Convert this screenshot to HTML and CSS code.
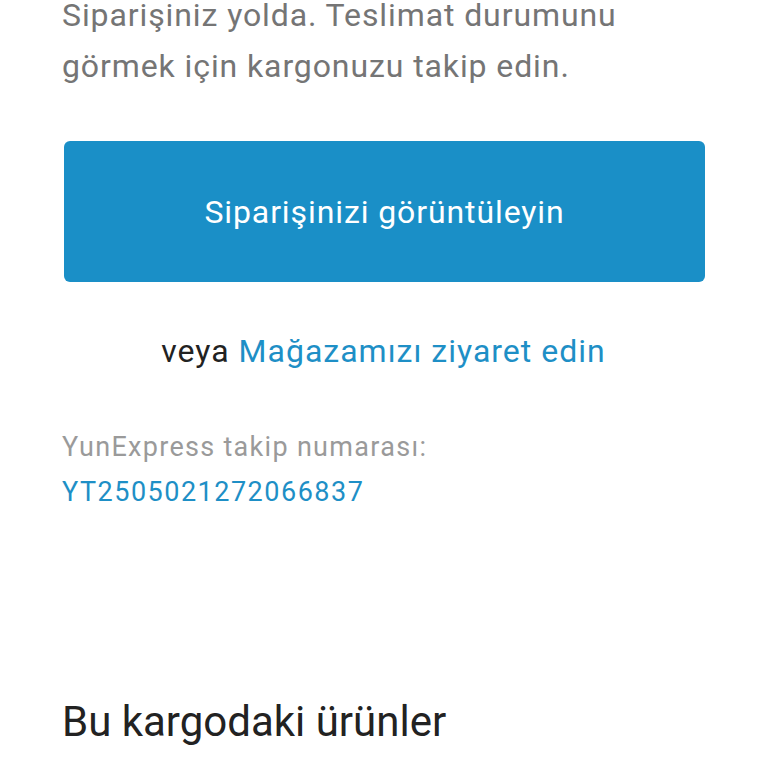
FILE: index.html
```html
<!DOCTYPE html>
<html lang="tr">
<head>
<meta charset="utf-8">
<link rel="stylesheet" href="styles.css">
</head>
<body>
<main class="page">
  <p class="intro">Siparişiniz yolda. Teslimat durumunu<br>görmek için kargonuzu takip edin.</p>
  <a class="btn" href="#">Siparişinizi görüntüleyin</a>
  <p class="alt">veya <a class="link" href="#">Mağazamızı ziyaret edin</a></p>
  <div class="tracking">
    <div class="track-label">YunExpress takip numarası:</div>
    <a class="track-num" href="#">YT2505021272066837</a>
  </div>
  <h2 class="section-title">Bu kargodaki ürünler</h2>
</main>
</body>
</html>
```

FILE: styles.css
```css
* { box-sizing: border-box; }
html, body { margin: 0; padding: 0; background: #ffffff; }
body {
  font-family: Roboto, "Noto Sans", "Liberation Sans", sans-serif;
  width: 768px;
  height: 768px;
  overflow: hidden;
}
.page {
  padding: 0 63px 0 62px;
  display: flex;
  flex-direction: column;
}
.intro {
  margin: -10px 0 0 0;
  font-size: 32px;
  line-height: 51px;
  letter-spacing: 0.9px;
  color: #757575;
}
.btn {
  margin: 49px 0 0 2px;
  height: 141px;
  border-radius: 6px;
  background: #1a8fc7;
  color: #ffffff;
  text-decoration: none;
  font-size: 32px;
  letter-spacing: 0.9px;
  display: flex;
  align-items: center;
  justify-content: center;
}
.alt {
  margin: 49px 0 0 0;
  text-align: center;
  font-size: 32px;
  line-height: 40px;
  letter-spacing: 1px;
  color: #222222;
}
.link { color: #1e8fc6; text-decoration: none; }
.tracking {
  margin-top: 58px;
  display: flex;
  flex-direction: column;
  gap: 9px;
}
.track-label {
  font-size: 27px;
  line-height: 36px;
  letter-spacing: 1.3px;
  color: #9a9a9a;
}
.track-num {
  font-size: 27px;
  line-height: 36px;
  letter-spacing: 1.5px;
  color: #1e8fc6;
  text-decoration: none;
}
.section-title {
  margin: 187px 0 0 0;
  font-size: 42px;
  line-height: 50px;
  font-weight: 400;
  color: #222222;
}
```
